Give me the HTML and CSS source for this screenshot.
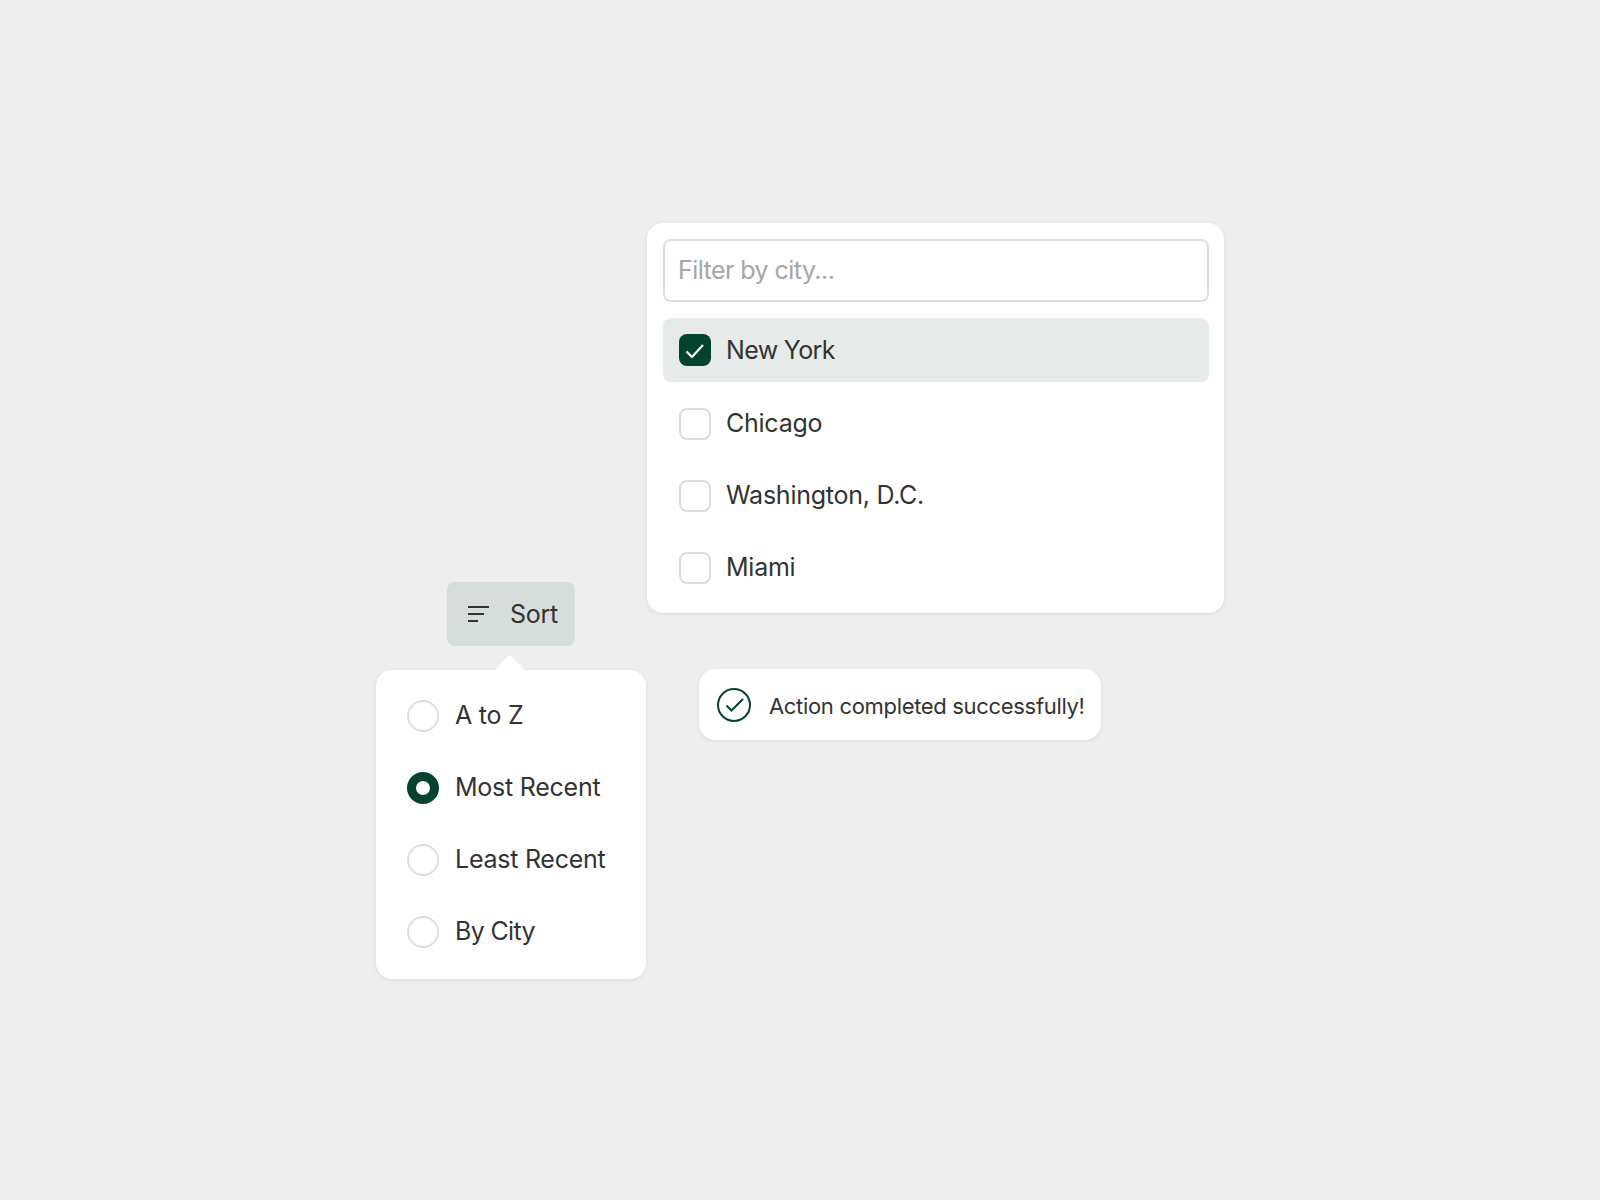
FILE: index.html
```html
<!DOCTYPE html>
<html lang="en">
<head>
<meta charset="utf-8">
<title>Filter and sort controls</title>
<link rel="stylesheet" href="styles.css">
</head>
<body>
<main class="canvas">
  <section class="sort-col">
    <button class="sort-btn" type="button">
      <svg class="sort-icon" width="24" height="18" viewBox="0 0 24 18" aria-hidden="true"><path d="M1 2h21M1 9h16M1 16h10" fill="none" stroke="#333" stroke-width="1.8"/></svg>
      <span>Sort</span>
    </button>
    <div class="menu card">
      <svg class="arrow" width="34" height="15" viewBox="0 0 34 15" aria-hidden="true"><path d="M2 15 15 1.2a3 3 0 0 1 4 0L32 15z" fill="#fff"/></svg>
      <div class="row"><span class="radio"></span><span class="label">A to Z</span></div>
      <div class="row"><span class="radio on"></span><span class="label">Most Recent</span></div>
      <div class="row"><span class="radio"></span><span class="label">Least Recent</span></div>
      <div class="row"><span class="radio"></span><span class="label tight">By City</span></div>
    </div>
  </section>
  <section class="filter-col">
    <div class="panel card">
      <div class="input"><span class="label">Filter by city...</span></div>
      <div class="list">
        <div class="row selected"><span class="check on"><svg width="20" height="16" viewBox="0 0 20 16" aria-hidden="true"><path d="M1.5 9.5 7 15 18 3" fill="none" stroke="#fff" stroke-width="2.2"/></svg></span><span class="tight">New York</span></div>
        <div class="row"><span class="check"></span><span class="city">Chicago</span></div>
        <div class="row"><span class="check"></span><span class="city">Washington, D.C.</span></div>
        <div class="row"><span class="check"></span><span class="city">Miami</span></div>
      </div>
    </div>
    <div class="toast card">
      <svg width="34" height="34" viewBox="0 0 34 34" aria-hidden="true"><circle cx="17" cy="17" r="16" fill="none" stroke="#03432f" stroke-width="2"/><path d="M9.5 17.5 14.5 22.5 26 11" fill="none" stroke="#03432f" stroke-width="2"/></svg>
      <span class="toast-text">Action completed successfully!</span>
    </div>
  </section>
</main>
</body>
</html>
```
FILE: styles.css
```css
* { box-sizing: border-box; }
html, body { margin: 0; height: 100%; }
body {
  background: #eeeeee;
  color: #333333;
  font-family: Inter, "Liberation Sans", sans-serif;
  font-size: 25px;
  letter-spacing: -0.25px;
}
.canvas {
  display: flex;
  align-items: flex-start;
  gap: 1px;
  width: 1600px;
  height: 1200px;
  padding: 223px 0 0 376px;
}
.card {
  background: #ffffff;
  box-shadow: 0 1px 4px rgba(0, 0, 0, 0.09);
}
.sort-col {
  display: flex;
  flex-direction: column;
  align-items: center;
  width: 270px;
  margin-top: 359px;
}
.sort-btn {
  display: flex;
  align-items: center;
  gap: 19px;
  width: 128px;
  height: 64px;
  padding: 0 0 0 20px;
  border: 0;
  border-radius: 8px;
  background: #d7dddb;
  color: inherit;
  font: inherit;
  letter-spacing: -0.25px;
}
.menu {
  position: relative;
  display: flex;
  flex-direction: column;
  gap: 8px;
  width: 270px;
  margin-top: 24px;
  padding: 14px 16px 15px;
  border-radius: 16px;
}
.arrow {
  position: absolute;
  left: 117px;
  top: -15px;
}
.label { padding-bottom: 2px; }
.city { padding-bottom: 3px; }
.row {
  display: flex;
  align-items: center;
  gap: 16px;
  height: 64px;
  padding-left: 15px;
  border-radius: 8px;
}
.radio {
  width: 32px;
  height: 32px;
  flex: none;
  border: 2px solid #dcdcdc;
  border-radius: 50%;
}
.radio.on { border: 9px solid #03432f; }
.filter-col {
  display: flex;
  flex-direction: column;
  align-items: flex-start;
  gap: 56px;
}
.panel {
  display: flex;
  flex-direction: column;
  gap: 16px;
  width: 577px;
  padding: 16px 15px 13px 16px;
  border-radius: 16px;
}
.input {
  display: flex;
  align-items: center;
  height: 63px;
  padding-left: 13px;
  border: 2px solid #dedede;
  border-radius: 8px;
  color: #a6a6a6;
  letter-spacing: -0.55px;
}
.list {
  display: flex;
  flex-direction: column;
  gap: 8px;
}
.list .row {
  gap: 15px;
  padding-left: 16px;
}
.selected {
  margin-bottom: 2px;
  background: #e6ebea;
}
.tight { letter-spacing: -0.65px; }
.check {
  display: flex;
  align-items: center;
  justify-content: center;
  width: 32px;
  height: 32px;
  flex: none;
  border: 2px solid #dcdcdc;
  border-radius: 8px;
}
.check.on { border: 0; background: #03432f; }
.toast {
  display: flex;
  align-items: center;
  gap: 18px;
  margin-left: 52px;
  height: 71px;
  padding: 0 16px 0 18px;
  border-radius: 16px;
  font-size: 22px;
  letter-spacing: -0.32px;
}
.toast-text { padding-top: 2px; }
```
